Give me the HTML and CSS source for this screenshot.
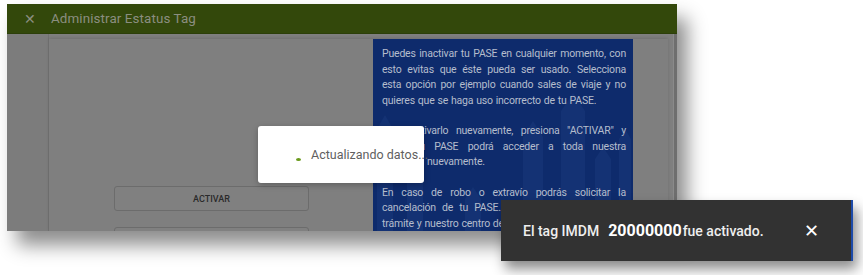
FILE: index.html
```html
<!DOCTYPE html>
<html lang="es">
<head>
    <meta charset="UTF-8">
    <title>Administrar Estatus Tag</title>
    <link rel="stylesheet" href="styles.css">
</head>
<body>
    <div class="window">
        <div class="title-bar">
            <span class="close">&#x2715;</span>
            <span class="title">Administrar Estatus Tag</span>
        </div>
        <div class="content">
            <div class="gutter"></div>
            <div class="panel">
                <div class="actions">
                    <button class="btn">ACTIVAR</button>
                    <button class="btn">INACTIVAR</button>
                </div>
                <div class="info">
                    <svg class="arrows" width="260" height="200" viewBox="0 0 260 200">
                        <path d="M4 200V90L12 76L20 90V200Z" />
                        <path d="M34 200V120L42 106L50 120V200Z" />
                        <path d="M150 200V98L160 82L170 98V200Z" />
                        <path d="M188 200V72L200 54L212 72V200Z" />
                        <path d="M222 200V120L230 108L238 120V200Z" />
                        <path d="M246 200V100L252 90L258 100V200Z" />
                        <path d="M92 200V160L100 148L108 160V200Z" />
                    </svg>
                    <p>Puedes inactivar tu PASE en cualquier momento, con esto evitas que éste pueda ser usado. Selecciona esta opción por ejemplo cuando sales de viaje y no quieres que se haga uso incorrecto de tu PASE.</p>
                    <p>Para activarlo nuevamente, presiona "ACTIVAR" y luego tu PASE podrá acceder a toda nuestra autopista nuevamente.</p>
                    <p>En caso de robo o extravío podrás solicitar la cancelación de tu PASE. Para realizar este último trámite y nuestro centro de atención te apoyará.</p>
                </div>
            </div>
            <div class="scroll"></div>
        </div>
        <div class="loading">
            <span class="spinner"></span>
            <span class="loading-text">Actualizando datos...</span>
        </div>
    </div>

    <div class="snackbar">
        <span class="msg">El tag IMDM</span>
        <span class="tag-num">20000000</span>
        <span class="msg">fue activado.</span>
        <span class="snack-close">&#x2715;</span>
    </div>
</body>
</html>
```

FILE: styles.css
```css
body {
    margin: 0;
    width: 863px;
    height: 275px;
    overflow: hidden;
    background-color: #fff;
    font-family: Roboto, "Liberation Sans", sans-serif;
    position: relative;
}

.window {
    position: relative;
    margin: 4px 0 0 7px;
    width: 670px;
    height: 227px;
    overflow: hidden;
    background-color: #7f7f7f;
    box-shadow: 10px 14px 18px rgba(0, 0, 0, 0.45);
}

.title-bar {
    height: 29px;
    background-color: #33480b;
    border-bottom: 1px solid #2c3f0a;
    display: flex;
    align-items: center;
    color: #8b8e80;
}

.close {
    width: 43px;
    text-align: center;
    font-size: 14px;
    padding-left: 1px;
}

.title {
    font-size: 13.4px;
    letter-spacing: 0.1px;
}

.content {
    display: flex;
    height: 197px;
}

.gutter {
    width: 41px;
    background-color: #7c7c7c;
    border-right: 1px solid #727272;
    flex-shrink: 0;
}

.panel {
    margin-top: 5px;
    width: 619px;
    display: grid;
    grid-template-columns: 324px 260px;
    align-items: start;
    box-shadow: 0 -1px 3px rgba(0, 0, 0, 0.12);
}

.actions {
    padding: 147px 0 0 65px;
    display: flex;
    flex-direction: column;
    gap: 16px;
}

.btn {
    width: 195px;
    height: 25px;
    border: 1px solid #6c6c6c;
    border-radius: 3px;
    background-color: #808080;
    color: #2a2a2a;
    font-family: Roboto, "Liberation Sans", sans-serif;
    font-size: 9px;
    font-weight: 500;
    padding: 0;
}

.info {
    position: relative;
    height: 200px;
    padding: 7px 7px 0 9px;
    background-color: #0e2b6c;
    color: #b5bdcc;
    font-size: 10.5px;
    letter-spacing: -0.2px;
    word-spacing: 0.5px;
    line-height: 15.5px;
    text-align: justify;
    overflow: hidden;
}

.info p {
    position: relative;
    margin: 0 0 15px;
}

.arrows {
    position: absolute;
    left: 0;
    top: 0;
}

.arrows path {
    fill: #1a3a7c;
    opacity: 0.5;
}

.scroll {
    width: 3px;
    margin-left: auto;
    background-color: #6e6e6e;
    border-left: 1px solid #8a8a8a;
}

.loading {
    position: absolute;
    left: 251px;
    top: 122px;
    width: 166px;
    height: 57px;
    background-color: #fff;
    border-radius: 3px;
    box-shadow: 0 2px 6px rgba(0, 0, 0, 0.25);
    display: flex;
    align-items: center;
    gap: 10px;
    padding-left: 38px;
    box-sizing: border-box;
    font-size: 12.5px;
    color: #5f5f5f;
}

.loading-text {
    white-space: nowrap;
}

.spinner {
    width: 5px;
    height: 3px;
    margin-top: 10px;
    border-radius: 50%;
    background-color: #6a9a1c;
    flex-shrink: 0;
}

.snackbar {
    position: absolute;
    left: 501px;
    top: 200px;
    width: 352px;
    height: 61px;
    background-color: #323232;
    color: #eee;
    display: flex;
    align-items: center;
    padding-left: 22px;
    box-sizing: border-box;
    box-shadow: 4px 8px 12px rgba(0, 0, 0, 0.45);
    border-right: 2px solid #1d4aa8;
}

.msg {
    font-size: 14px;
    font-weight: 500;
}

.tag-num {
    font-size: 16px;
    font-weight: 700;
    color: #fff;
    margin: 0 1px 0 9px;
}

.snack-close {
    margin-left: 40px;
    font-size: 18px;
    color: #fff;
}
```
